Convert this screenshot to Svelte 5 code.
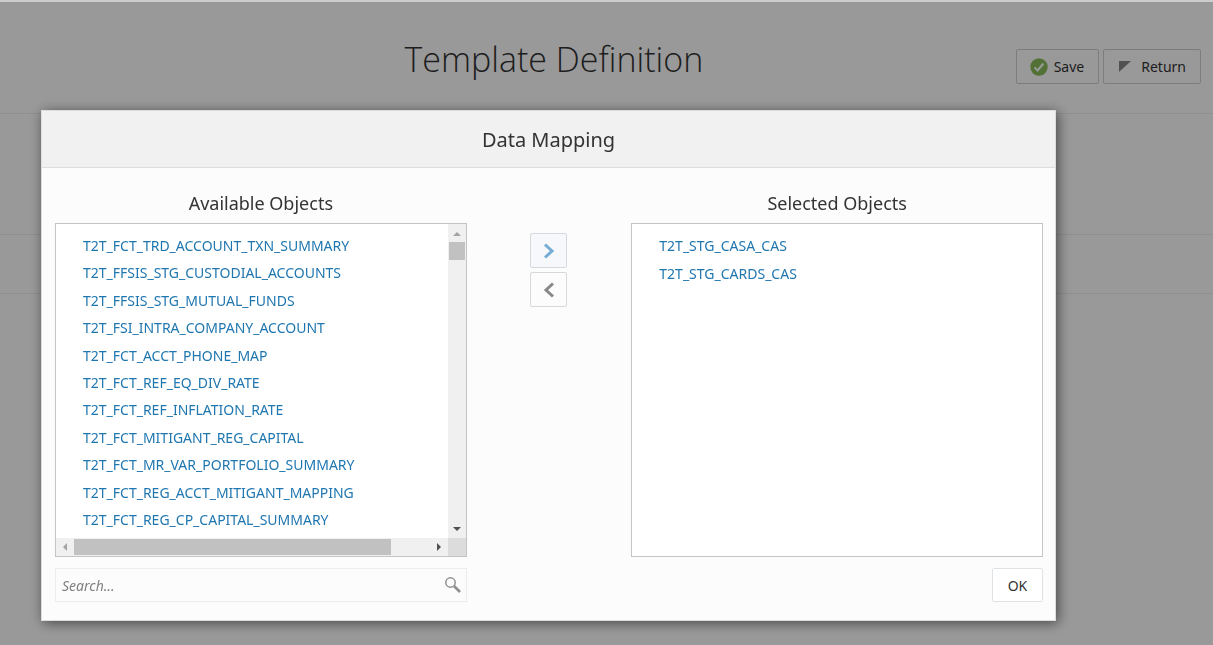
<script lang="ts">
  let available = $state([
    'T2T_FCT_TRD_ACCOUNT_TXN_SUMMARY',
    'T2T_FFSIS_STG_CUSTODIAL_ACCOUNTS',
    'T2T_FFSIS_STG_MUTUAL_FUNDS',
    'T2T_FSI_INTRA_COMPANY_ACCOUNT',
    'T2T_FCT_ACCT_PHONE_MAP',
    'T2T_FCT_REF_EQ_DIV_RATE',
    'T2T_FCT_REF_INFLATION_RATE',
    'T2T_FCT_MITIGANT_REG_CAPITAL',
    'T2T_FCT_MR_VAR_PORTFOLIO_SUMMARY',
    'T2T_FCT_REG_ACCT_MITIGANT_MAPPING',
    'T2T_FCT_REG_CP_CAPITAL_SUMMARY'
  ]);
  let selected = $state(['T2T_STG_CASA_CAS', 'T2T_STG_CARDS_CAS']);

  let active = $state('');
  let search = $state('');
  let open = $state(true);

  let visible = $derived(
    available.filter((name) => name.toLowerCase().includes(search.toLowerCase()))
  );

  function add() {
    if (!available.includes(active)) return;
    available = available.filter((name) => name !== active);
    selected = [...selected, active];
  }

  function remove() {
    if (!selected.includes(active)) return;
    selected = selected.filter((name) => name !== active);
    available = [...available, active];
  }
</script>

<div class="page">
  <header class="page-header">
    <h1>Template Definition</h1>
    <div class="actions">
      <button class="action">
        <svg width="18" height="18" viewBox="0 0 18 18">
          <circle cx="9" cy="9" r="8.7" fill="#8bbd5a" />
          <path d="M4.5 9.4l3.1 3.1 5.8-7" fill="none" stroke="#fff" stroke-width="2" />
        </svg>
        Save
      </button>
      <button class="action">
        <svg width="18" height="18" viewBox="0 0 18 18">
          <path d="M2 3h12L2 14z" fill="#888" />
        </svg>
        Return
      </button>
    </div>
  </header>
  <div class="section tall"></div>
  <div class="section"></div>
</div>

{#if open}
  <div class="overlay">
    <div class="dialog" role="dialog" aria-modal="true" aria-labelledby="dialog-title">
      <h2 id="dialog-title">Data Mapping</h2>

      <div class="dialog-body">
        <section>
          <h3>Available Objects</h3>
          <div class="list-box scrollable">
            <ul class="objects filled">
              {#each visible as name (name)}
                <li>
                  <button class:active={active === name} onclick={() => (active = name)}>{name}</button>
                </li>
              {/each}
            </ul>
            <div class="scroll-y" aria-hidden="true">
              <svg width="18" height="18" viewBox="0 0 18 18"><path d="M5 12l4-4 4 4z" fill="#a3a3a3" /></svg>
              <div class="thumb"></div>
              <svg width="18" height="18" viewBox="0 0 18 18"><path d="M5 7h8l-4 4z" fill="#505050" /></svg>
            </div>
            <div class="scroll-x" aria-hidden="true">
              <svg width="18" height="18" viewBox="0 0 18 18"><path d="M11 5v8L7 9z" fill="#a3a3a3" /></svg>
              <div class="thumb"></div>
              <svg width="18" height="18" viewBox="0 0 18 18"><path d="M7 5v8l4-4z" fill="#505050" /></svg>
            </div>
            <div class="corner"></div>
          </div>
        </section>

        <div class="movers">
          <button class="move add" onclick={add} aria-label="Add selected object">
            <svg width="20" height="20" viewBox="0 0 20 20"><path d="M6 3.5l7 6.5-7 6.5" /></svg>
          </button>
          <button class="move" onclick={remove} aria-label="Remove selected object">
            <svg width="20" height="20" viewBox="0 0 20 20"><path d="M14 3.5L7 10l7 6.5" /></svg>
          </button>
        </div>

        <section>
          <h3>Selected Objects</h3>
          <div class="list-box">
            <ul class="objects">
              {#each selected as name (name)}
                <li>
                  <button class:active={active === name} onclick={() => (active = name)}>{name}</button>
                </li>
              {/each}
            </ul>
          </div>
        </section>

        <label class="search">
          <input type="text" placeholder="Search..." aria-label="Search available objects" bind:value={search} />
          <svg width="18" height="18" viewBox="0 0 18 18" fill="none" stroke="#8f8f8f">
            <circle cx="6.5" cy="6.5" r="4.7" stroke-width="1.5" />
            <path d="M10 10l6 6" stroke-width="2.6" />
          </svg>
        </label>

        <button class="ok" onclick={() => (open = false)}>OK</button>
      </div>
    </div>
  </div>
{/if}

<style>
  :global(body) {
    background: #fff;
  }

  .page,
  .overlay {
    font-family: 'Segoe UI', 'Noto Sans', 'Open Sans', sans-serif;
    font-size: 14px;
    color: #333;
  }

  h1,
  h2,
  h3,
  ul {
    margin: 0;
    padding: 0;
    font-weight: 400;
  }

  * {
    box-sizing: border-box;
  }

  button,
  input {
    font: inherit;
    color: inherit;
  }

  button {
    cursor: pointer;
  }

  svg {
    display: block;
    flex: none;
  }

  .page {
    min-height: 100vh;
    border-top: 2px solid #ccc;
  }

  .page-header {
    display: flex;
    align-items: center;
    height: 112px;
    padding: 0 12px 0 92px;
    border-bottom: 1px solid #eee;
  }

  h1 {
    flex: 1;
    padding-top: 2px;
    font-family: 'Segoe UI', 'Open Sans', sans-serif;
    font-size: 34px;
    font-weight: 300;
    line-height: 48px;
    text-align: center;
  }

  .actions {
    display: flex;
    gap: 4px;
    padding-top: 18px;
  }

  .action {
    display: flex;
    align-items: center;
    gap: 6px;
    height: 35px;
    padding: 0 14px 0 13px;
    border: 1px solid #d0d0d0;
    border-radius: 2px;
    background: transparent;
  }

  .section {
    height: 59px;
    border-bottom: 1px solid #eee;
  }

  .section.tall {
    height: 121px;
  }

  .overlay {
    position: fixed;
    inset: 2px 0 0;
    padding: 108px 157px 24px 41px;
    background: rgba(0, 0, 0, 0.4);
  }

  .dialog {
    background: #fcfcfc;
    border: 1px solid #ddd;
    box-shadow: 2px 2px 12px rgba(0, 0, 0, 0.55);
  }

  h2 {
    padding: 15px 0 13px;
    border-bottom: 1px solid #ddd;
    background: #f1f1f1;
    font-size: 20px;
    line-height: 28px;
    text-align: center;
  }

  .dialog-body {
    display: grid;
    grid-template-columns: 5fr 2fr 5fr;
    row-gap: 11px;
    padding: 19px 12px 18px 13px;
  }

  h3 {
    padding-bottom: 4px;
    font-size: 18px;
    line-height: 32px;
    text-align: center;
  }

  .list-box {
    height: 334px;
    border: 1px solid #c4c4c4;
    background: #fff;
  }

  .scrollable {
    display: grid;
    grid-template-columns: 1fr 18px;
    grid-template-rows: 1fr 18px;
  }

  .objects {
    padding: 8px 0 4px 27px;
    list-style: none;
  }

  .objects li {
    display: flex;
    align-items: center;
    height: 28px;
  }

  .filled {
    display: grid;
    grid-template-rows: repeat(11, 1fr);
  }

  .filled li {
    height: auto;
  }

  .objects button {
    padding: 0;
    border: 0;
    background: none;
    color: #2077b0;
    line-height: 20px;
  }

  .objects button.active {
    text-decoration: underline;
  }

  .scroll-y,
  .scroll-x {
    display: flex;
    background: #f0f0f0;
  }

  .scroll-y {
    flex-direction: column;
    justify-content: space-between;
  }

  .thumb {
    background: #c1c1c1;
  }

  .scroll-y .thumb {
    height: 18px;
    margin: 0 1px auto;
  }

  .scroll-x .thumb {
    width: 81%;
    margin: 1px auto 1px 0;
  }

  .corner {
    background: #dcdcdc;
  }

  .movers {
    display: flex;
    flex-direction: column;
    align-items: center;
    gap: 4px;
    padding-top: 46px;
  }

  .move {
    display: grid;
    place-items: center;
    width: 37px;
    height: 35px;
    padding: 0;
    border: 1px solid #d6d9dc;
    border-radius: 2px;
    background: #fcfcfc;
  }

  .move path {
    fill: none;
    stroke: #888;
    stroke-width: 3;
  }

  .move.add {
    background: #f6f8fb;
  }

  .move.add path {
    stroke: #76acd4;
  }

  .search {
    display: flex;
    align-items: center;
    height: 34px;
    padding: 0 4px 0 6px;
    border: 1px solid #ececec;
  }

  .search input {
    flex: 1;
    min-width: 0;
    padding: 0;
    border: 0;
    outline: 0;
    background: none;
  }

  .search input::placeholder {
    color: #808080;
    font-style: italic;
    opacity: 1;
  }

  .ok {
    grid-column: 3;
    justify-self: end;
    width: 51px;
    height: 34px;
    padding: 0;
    border: 1px solid #dfe3e6;
    border-radius: 2px;
    background: #fff;
  }
</style>
